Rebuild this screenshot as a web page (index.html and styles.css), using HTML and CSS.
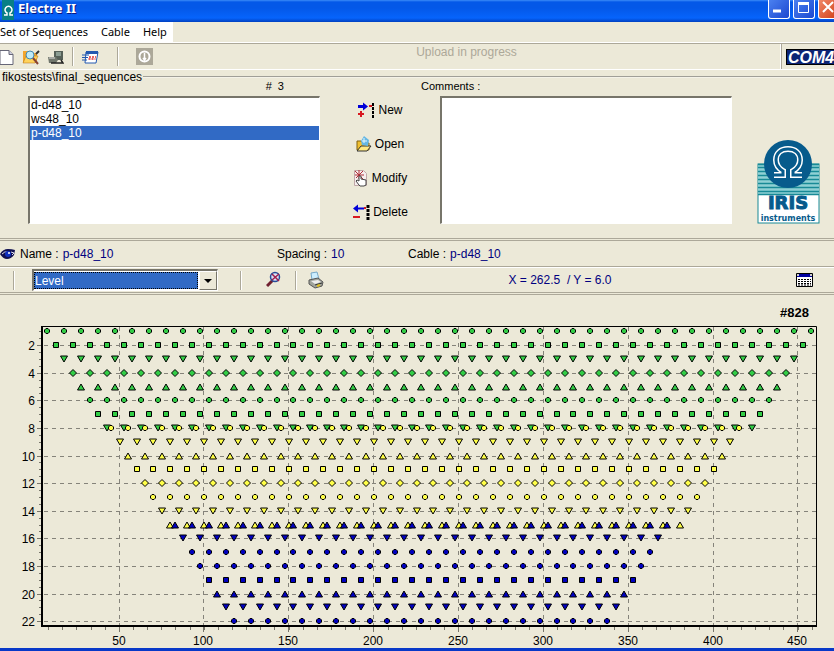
FILE: index.html
```html
<!DOCTYPE html>
<html lang="en">

<head>
    <meta charset="utf-8">
    <title>Electre II</title>
    <link rel="stylesheet" href="styles.css">
</head>

<body>

    <!--title bar-->
    <header class="titlebar">
        <svg class="app-icon" width="12" height="20" viewBox="0 0 12 20">
            <rect width="12" height="20" fill="#087f86" />
            <path d="M2 15h3v-2a3.500 3.500 0 1 1 3 0v2h3" fill="none" stroke="#fff" stroke-width="1.500" />
        </svg>
        <h1>Electre II</h1>
        <div class="win-buttons">
            <button class="win" aria-label="Minimize"><svg width="20" height="18"><path d="M4 11h8" stroke="#fff" stroke-width="3" /></svg></button>
            <button class="win" aria-label="Maximize"><svg width="20" height="18"><path d="M4.500 3v9.500h10V3" fill="none" stroke="#fff" /><path d="M4 3.500h11" stroke="#fff" stroke-width="3" /></svg></button>
            <button class="win close" aria-label="Close"><svg width="20" height="18"><path d="M4 2l10 10M14 2L4 12" stroke="#fff" stroke-width="2" /></svg></button>
        </div>
    </header>

    <!--menu-->
    <nav class="menubar">
        <div class="menu">
            <button>Set of Sequences</button>
            <button>Cable</button>
            <button>Help</button>
        </div>
    </nav>

    <!--toolbar-->
    <div class="toolbar">
        <div class="tools">
            <button class="tool" aria-label="New set">
                <svg width="14" height="18"><path d="M0 2.500h9l4 4v10H0z" fill="#fff" stroke="#667" /><path d="M9 2.500v4h4" fill="#ccd" stroke="#667" /></svg>
            </button>
            <button class="tool" aria-label="Browse set">
                <svg width="18" height="18"><path d="M1 3h5l1 2h8v10H1z" fill="#f4a52c" /><path d="M1 15l3-7h12l-3 7z" fill="#ffd35c" stroke="#b26a10" stroke-width=".500" /><circle cx="8" cy="7" r="4" fill="#bfeaf8" stroke="#4488b0" /><path d="M11 10l5 6" stroke="#843" stroke-width="2" /><path d="M14 6l3-3" stroke="#333" stroke-width="2" /></svg>
            </button>
            <button class="tool" aria-label="Transfer">
                <svg width="16" height="18"><path d="M6 3h9v9H6z" fill="#556058" /><path d="M8 4h5v4H8z" fill="#8a9c92" /><path d="M0 9h8l2 3-2 3H1z" fill="#70766c" /><path d="M1 10h6" stroke="#ddd" /><path d="M3 15h12l-2-3" fill="none" stroke="#222" stroke-width="1.500" /></svg>
            </button>
            <span class="sep"></span>
            <button class="tool" aria-label="Upload">
                <svg width="17" height="18"><path d="M4 4h12l-2 11H3z" fill="#fff" stroke="#2358b0" /><path d="M4 3h12v3H4z" fill="#2358b0" /><path d="M0 7h7M0 9.500h6M0 12h5" stroke="#2358b0" /><path d="M7 9h7M6.500 11h7" stroke="#d33" stroke-width="1.500" stroke-dasharray="2 1" /></svg>
            </button>
            <span class="sep sep-wide"></span>
            <button class="tool" aria-label="Stop" disabled>
                <svg width="17" height="17"><rect width="17" height="17" fill="#aca899" /><circle cx="8.500" cy="8.500" r="5" fill="none" stroke="#fff" stroke-width="2" /><path d="M8.500 5v6M7 10l1.500 2L10 10" fill="none" stroke="#fff" stroke-width="1.500" /></svg>
            </button>
        </div>
        <p class="progress">Upload in progress</p>
        <div class="port"><span>COM4</span></div>
    </div>

    <!--sequences-->
    <fieldset class="set">
        <legend>fikostests\final_sequences</legend>
        <div class="set-grid">
            <div class="col">
                <label class="count" for="seq"># &nbsp;3</label>
                <select class="box" id="seq" size="9">
                    <option>d-d48_10</option>
                    <option>ws48_10</option>
                    <option selected>p-d48_10</option>
                </select>
            </div>
            <div class="actions">
                <button>
                    <svg width="18" height="18"><path d="M1 5.500h6" stroke="#0000d8" stroke-width="3" /><path d="M6 1.500l5 4-5 4z" fill="#0000d8" /><path d="M1 13h6M4 10v6" stroke="#d81820" stroke-width="2" /><path d="M16 2v15" stroke="#000" stroke-width="2" stroke-dasharray="3 1" /><path d="M12 5h3" stroke="#d81820" stroke-width="2" /></svg>
                    New
                </button>
                <button>
                    <svg width="16" height="18"><path d="M1 6h4l2 2h6v7H1z" fill="#f0c030" stroke="#806010" /><path d="M1 16l4-5h10l-4 5z" fill="#ffe880" stroke="#333" /><path d="M8 1l5 4-1 6-6-1-1-4z" fill="#65b7e4" /><path d="M8 3v5M6 6h5" stroke="#e8faff" /></svg>
                    Open
                </button>
                <button>
                    <svg width="16" height="18"><path d="M1.500 1.500h9l3 3v12h-12z" fill="#f6eeee" stroke="#c0a8a8" /><path d="M2 2l8 8M10 2L3 9M6 1v9M2 6h9" stroke="#b03038" /><path d="M6 16l-3-4 1-1 2 1V7h2v3l5 1v5l-2 1H7z" fill="#fff" stroke="#444" /></svg>
                    Modify
                </button>
                <button>
                    <svg width="18" height="18"><path d="M5 5.500h7" stroke="#0000d8" stroke-width="2" /><path d="M6 1.500l-5 4 5 4z" fill="#0000d8" /><path d="M1 14h7" stroke="#d81820" stroke-width="2" /><path d="M16 2v15" stroke="#000" stroke-width="3" stroke-dasharray="3 1" /><path d="M12 5h2" stroke="#d81820" stroke-width="2" /></svg>
                    Delete
                </button>
            </div>
            <div class="col">
                <label class="comments-label" for="comments">Comments :</label>
                <textarea class="box" id="comments"></textarea>
            </div>
            <div class="brand">
                <svg width="63" height="84" viewBox="0 0 63 84">
                    <rect x="1" y="24" width="61" height="59" fill="#fff" stroke="#188a96" />
                    <rect x="1" y="24" width="61" height="31" fill="#8fd0d4" />
                    <path d="M1 24.500h61M1 27.500h61M1 31.500h61M1 35.500h61M1 39.500h61M1 43.500h61M1 47.500h61M1 51.500h61M1 54.500h61" stroke="#188a96" stroke-width="1.500" />
                    <circle cx="31" cy="24" r="24" fill="#075b8c" />
                    <path d="M17 35h9v-4c-5-3-7-7-7-11 0-7 5-11 12-11s12 4 12 11c0 4-2 8-7 11v4h9" fill="none" stroke="#fff" stroke-width="6" />
                    <path d="M17 35h9v-4c-5-3-7-7-7-11 0-7 5-11 12-11s12 4 12 11c0 4-2 8-7 11v4h9" fill="none" stroke="#075b8c" stroke-width="3" />
                    <text class="brand-name" x="31" y="69">IRIS</text>
                    <text class="brand-sub" x="31" y="81">instruments</text>
                </svg>
            </div>
        </div>
    </fieldset>

    <!--current sequence-->
    <div class="info">
        <svg width="16" height="12"><path d="M0 6q3-5 8-5 4 0 7 1l-1 5q-3 4-7 4T0 6z" fill="#101050" /><path d="M2 6q3-3 5-2M11 4l3 1-2 2" stroke="#dde" fill="none" /><circle cx="8" cy="6" r="3" fill="#1030c0" /><circle cx="9" cy="5" r="1" fill="#fff" /></svg>
        <dl>
            <div class="name"><dt>Name :</dt><dd>p-d48_10</dd></div>
            <div class="spacing"><dt>Spacing :</dt><dd>10</dd></div>
            <div><dt>Cable :</dt><dd>p-d48_10</dd></div>
        </dl>
    </div>

    <div class="viewbar">
        <span class="sep"></span>
        <div class="combo">
            <select aria-label="Display">
                <option>Level</option>
            </select>
            <span class="arrow"></span>
        </div>
        <span class="sep sep-mid"></span>
        <button class="tool zoom" aria-label="Reset zoom">
            <svg width="16" height="18"><path d="M7 9l-6 6" stroke="#702030" stroke-width="3" /><circle cx="9" cy="6" r="4.500" fill="#dce4f4" stroke="#284c98" stroke-width="1.500" /><path d="M6 3l7 7M13 3L6 9" stroke="#a02050" stroke-width="1.500" /></svg>
        </button>
        <span class="sep"></span>
        <button class="tool print" aria-label="Print">
            <svg width="16" height="18"><path d="M4 9L3 2l6-1 2 7z" fill="#cceeff" stroke="#76a8c8" /><path d="M1 9l9-2 5 4-1 4-7 2-6-4z" fill="#a0a49c" stroke="#555" /><path d="M3 10l7-1 3 2-6 2z" fill="#eee" /><path d="M7 14l7-2" stroke="#333" /><path d="M9 15l3-1" stroke="#e0c020" stroke-width="2" /></svg>
        </button>
        <output class="coords">X = 262.5 &nbsp;/ Y = 6.0</output>
        <button class="tool" aria-label="Table">
            <svg width="17" height="14"><path d="M.500 .500h16v13H.500z" fill="#fff" stroke="#000" /><path d="M1 1h15v3H1z" fill="#0000a0" /><path d="M1 2h2M14 2h2" stroke="#ccc" stroke-width="2" /><path d="M2 6.500h13M2 8.500h13M2 10.500h13M2 12h13" stroke="#000" stroke-dasharray="2 1" /></svg>
        </button>
    </div>

    <!--chart-->
    <main class="chart">
        <svg id="plot" viewBox="0 0 834 353"></svg>
    </main>

    <script src="chart.js"></script>
</body>

</html>
```
FILE: styles.css
```css
* {
    margin: 0;
    padding: 0;
    box-sizing: border-box;
}

body {
    min-height: 100vh;
    display: flex;
    flex-direction: column;
    background: #ece9d8;
    border-bottom: 3px solid #0838c8;
    font-family: "Liberation Sans", Arial, sans-serif;
    font-size: 12px;
    line-height: 14px;
    color: #000;
    overflow: hidden;
}

button {
    font: inherit;
    color: inherit;
    background: none;
    border: 0;
}

svg {
    display: block;
    flex: none;
}

/* title bar */
.titlebar {
    height: 22px;
    display: flex;
    align-items: flex-start;
    gap: 4px;
    padding-left: 2px;
    background: linear-gradient(#3c8cf8 0, #0458e8 2px, #0458e8 8px, #0664fc 18px, #0040c0 22px);
}

.titlebar h1 {
    flex: 1;
    font-family: "Noto Sans", sans-serif;
    font-size: 13px;
    line-height: 17px;
    color: #fff;
    text-shadow: 1px 1px #0a1883;
}

.win-buttons {
    display: flex;
    gap: 3px;
    width: 66px;
    overflow: hidden;
}

.win {
    flex: none;
    width: 22px;
    height: 19px;
    border: 1px solid #fff;
    border-top: 0;
    border-radius: 0 0 3px 3px;
    background: linear-gradient(135deg, #4a80f0, #1c48d0);
}

.close {
    background: linear-gradient(135deg, #f08868, #d03c14);
}

/* menu */
.menubar {
    display: flex;
    border-bottom: 1px solid #fff;
}

.menu {
    display: flex;
    gap: 13px;
    height: 20px;
    padding-right: 6px;
    background: #fff;
    font-family: "Noto Sans", sans-serif;
    font-size: 11px;
}

/* toolbar */
.toolbar {
    display: flex;
    height: 27px;
    border-top: 1px solid #aca899;
    border-bottom: 1px solid #fff;
}

.tools {
    display: flex;
    align-items: center;
    gap: 8px;
    width: 152px;
}

.sep {
    width: 2px;
    height: 19px;
    border-left: 1px solid #aca899;
    border-right: 1px solid #fff;
}

.sep-wide {
    margin: 0 9px 0 10px;
}

.progress {
    flex: 1;
    padding-top: 1px;
    text-align: center;
    color: #aca899;
}

.port {
    width: 53px;
    display: flex;
    align-items: center;
    padding-left: 4px;
    border-left: 1px solid #aca899;
    box-shadow: -1px 0 #fff;
}

.port span {
    flex: 1;
    height: 16px;
    padding-left: 1px;
    background: #0c2474;
    border: 1px solid #000;
    border-right: 0;
    color: #fff;
    font-size: 16px;
    line-height: 15px;
    font-weight: bold;
    font-style: italic;
}

/* sequences */
.set {
    border: 0;
    border-top: 2px groove #fff;
    border-top-color: #f4f2e8;
    padding-bottom: 14px;
    min-width: 0;
}

.set legend {
    padding: 0 1px 0 2px;
}

.set-grid {
    display: grid;
    grid-template-columns: 1fr 120px 1fr 88px;
    height: 140px;
    padding: 0 14px 0 28px;
}

.col {
    display: flex;
    flex-direction: column;
    min-width: 0;
}

.col label {
    height: 12px;
    line-height: 4px;
    font-size: 11px;
}

.count {
    align-self: flex-end;
    padding-right: 36px;
}

.comments-label {
    margin-left: -19px;
}

.box {
    width: 100%;
    height: 128px;
    background: #fff;
    border: 1px solid #fff;
    border-top: 2px solid #77756a;
    border-left: 2px solid #77756a;
    border-radius: 0;
    outline: 0;
    resize: none;
    overflow: hidden;
    font: 12px/14px "Liberation Sans", Arial, sans-serif;
}

.box option {
    min-height: 14px;
    height: 14px;
    padding: 0 1px;
    color: #000;
}

.box option:checked {
    background: #316ac5 linear-gradient(#316ac5, #316ac5);
    -webkit-text-fill-color: #fff;
}

.actions {
    display: flex;
    flex-direction: column;
    padding-top: 9px;
}

.actions button {
    display: flex;
    align-items: center;
    justify-content: center;
    gap: 3px;
    height: 34px;
}

.brand {
    align-self: end;
    justify-self: end;
    padding-bottom: 5px;
}

.brand-name {
    font: bold 18px "DejaVu Sans", sans-serif;
    text-anchor: middle;
    fill: #075b8c;
    stroke: #075b8c;
}

.brand-sub {
    font: bold 8px "DejaVu Sans", sans-serif;
    text-anchor: middle;
    fill: #075b8c;
}

/* current sequence */
.info {
    display: flex;
    align-items: center;
    gap: 4px;
    height: 29px;
    border-top: 3px double #aca899;
    border-bottom: 1px solid #aca899;
}

.info dl,
.info dl div {
    display: flex;
}

.info dt {
    margin-right: 4px;
}

.info dd {
    color: #000080;
}

.name {
    width: 257px;
}

.spacing {
    width: 131px;
}

.viewbar {
    display: flex;
    align-items: center;
    height: 28px;
    padding: 0 21px 0 13px;
    border-top: 1px solid #fff;
    border-bottom: 3px double #aca899;
}

.combo {
    display: flex;
    width: 186px;
    height: 22px;
    margin-left: 17px;
    background: #fff;
    border: 1px solid #fff;
    border-top: 2px solid #77756a;
    border-left: 2px solid #77756a;
}

.combo select {
    flex: 1;
    margin: 1px 1px 1px 0;
    appearance: none;
    background: #316ac5;
    border: 1px dotted #000;
    border-radius: 0;
    color: #fff;
    font: 12px/14px "Liberation Sans", Arial, sans-serif;
}

.arrow {
    display: flex;
    align-items: center;
    justify-content: center;
    width: 18px;
    background: #ece9d8;
    border: 1px solid #fff;
    border-right-color: #77756a;
    border-bottom-color: #77756a;
}

.arrow::before {
    content: "";
    border: 4px solid transparent;
    border-top-color: #000;
    border-bottom: 0;
}

.sep-mid {
    margin-left: 22px;
}

.zoom {
    margin: 0 13px 0 24px;
}

.print {
    margin-left: 11px;
}

.coords {
    flex: 1;
    text-align: center;
    color: #000080;
}

/* chart */
.chart svg {
    width: 100%;
}

.chart text {
    font: 12px "Liberation Sans", Arial, sans-serif;
}

.chart .total {
    font-size: 13px;
    font-weight: bold;
}

.x-label {
    text-anchor: middle;
}

.y-label {
    text-anchor: end;
}

.grid {
    stroke: #85837a;
    stroke-dasharray: 4 4;
}

.tick {
    stroke: #77756a;
}

.axis {
    fill: none;
    stroke: #000;
    stroke-width: 2;
}

.frame {
    fill: none;
    stroke: #000;
}

.mark {
    stroke: #000;
}

.green {
    fill: #32cd46;
}

.yellow {
    fill: #ffff48;
}

.blue {
    fill: #0000c0;
}
```
FILE: chart.js
```js
var NS = "http://www.w3.org/2000/svg";
var plot = document.getElementById("plot");

// marker outlines around 0,0
var shapes = {
    circle: "M-1 -2.500h2l1.500 1.500v2l-1.500 1.500h-2l-1.500 -1.500v-2z",
    square: "M-2.500 -2.500h5v5h-5z",
    diamond: "M0 -3.500l3.500 3.500l-3.500 3.500l-3.500 -3.500z",
    up: "M0 -3l3.500 6h-7z",
    down: "M0 3l3.500 -6h-7z"
};

// color, first level, first x, number of points, shape of each level
var series = [
    ["green", 1, 7.5, 46, ["circle", "square", "down", "diamond", "up", "circle", "square", "down"]],
    ["yellow", 8, 45, 38, ["circle", "down", "up", "square", "diamond", "circle", "down", "up"]],
    ["blue", 15, 82.5, 30, ["up", "down", "circle", "circle", "square", "up", "down", "circle"]]
];

function px(x) {
    return Math.round(34.7 + x * 1.697);
}

function py(level) {
    return Math.round(22.5 + level * 13.8);
}

function add(name, attrs, text) {
    var el = document.createElementNS(NS, name);
    for (var key in attrs) el.setAttribute(key, attrs[key]);
    if (text) el.textContent = text;
    plot.appendChild(el);
}

function line(cls, d) {
    add("path", { "class": cls, d: d });
}

var total = 0, i, x, y;

// grid and labels
for (i = 2; i <= 22; i += 2) {
    y = py(i);
    line("grid", "M44 " + (y + 0.5) + "H816");
    line("tick", "M37 " + (y + 0.5) + "h4");
    add("text", { "class": "y-label", x: 35, y: y + 5 }, i);
}
for (i = 50; i <= 450; i += 50) {
    x = px(i);
    line("grid", "M" + (x - 0.5) + " 32V331");
    line("tick", "M" + (x - 0.5) + " 332v5");
    add("text", { "class": "x-label", x: x - 1, y: 350 }, i);
}
for (i = 8.5; i < 460; i += 8.333) line("tick", "M" + (px(i) - 0.5) + " 332v3");
for (i = 1; i < 22; i += 0.5) line("tick", "M39 " + (py(i) + 0.5) + "h2");

line("frame", "M42 31.500H816.500V331");
line("axis", "M42 31V331H817");

// measurement points
series.forEach(function(s) {
    s[4].forEach(function(shape, row) {
        for (var n = 0; n < s[3] - row; n++) {
            add("path", {
                "class": "mark " + s[0],
                d: shapes[shape],
                transform: "translate(" + px(s[2] + row * 5 + n * 10) + " " + py(s[1] + row) + ")"
            });
            total++;
        }
    });
});

add("text", { "class": "total", x: 780, y: 22 }, "#" + total);
```
